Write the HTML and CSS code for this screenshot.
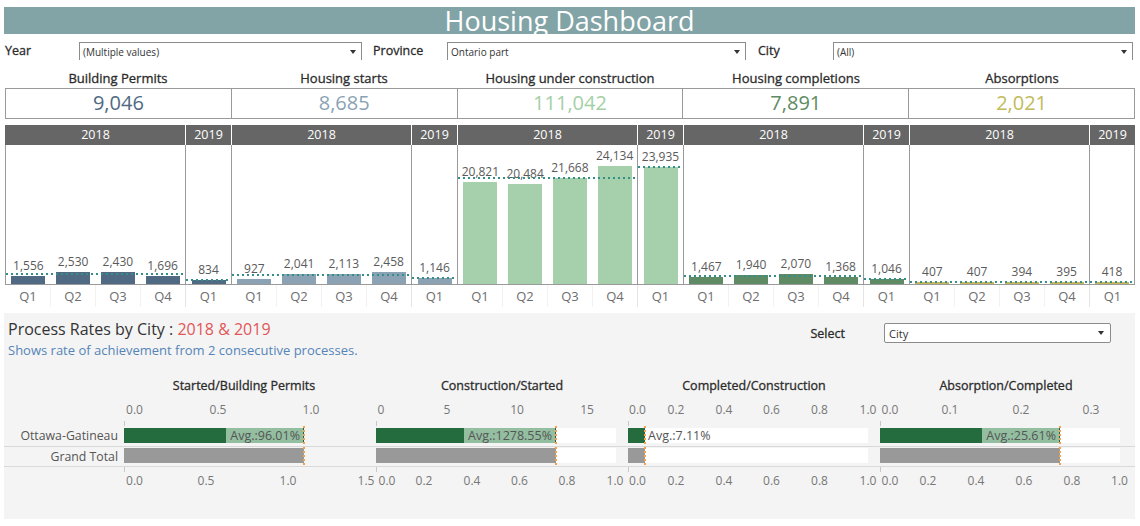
FILE: index.html
```html
<!DOCTYPE html>
<html lang="en">
<head>
<meta charset="utf-8">
<title>Housing Dashboard</title>
<link rel="stylesheet" href="styles.css">
</head>
<body>
<div class="dash">
  <div class="title">Housing Dashboard</div>

  <div class="filters">
    <span class="flabel fl-year">Year</span>
    <div class="fselect fs-year"><span>(Multiple values)</span><span class="caret"></span></div>
    <span class="flabel fl-prov">Province</span>
    <div class="fselect fs-prov"><span>Ontario part</span><span class="caret"></span></div>
    <span class="flabel fl-city">City</span>
    <div class="fselect fs-city"><span>(All)</span><span class="caret"></span></div>
  </div>

  <div class="kpi-titles">
    <div>Building Permits</div>
    <div>Housing starts</div>
    <div>Housing under construction</div>
    <div>Housing completions</div>
    <div>Absorptions</div>
  </div>
  <div class="kpi-values">
    <div class="k1">9,046</div>
    <div class="k2">8,685</div>
    <div class="k3">111,042</div>
    <div class="k4">7,891</div>
    <div class="k5">2,021</div>
  </div>

  <div class="charts">
    <div class="metric m1">
      <div class="mhead"><div class="h18">2018</div><div class="h19">2019</div></div>
      <div class="mplot">
        <div class="p18">
          <div class="slot"><span class="val">1,556</span><div class="bar" style="height:8px"></div></div>
          <div class="slot"><span class="val">2,530</span><div class="bar" style="height:12px"></div></div>
          <div class="slot"><span class="val">2,430</span><div class="bar" style="height:12px"></div></div>
          <div class="slot"><span class="val">1,696</span><div class="bar" style="height:8px"></div></div>
          <div class="avg" style="bottom:9px"></div>
        </div>
        <div class="p19">
          <div class="slot"><span class="val">834</span><div class="bar" style="height:4px"></div></div>
          <div class="avg" style="bottom:3px"></div>
        </div>
      </div>
      <div class="mq"><div class="q18"><span>Q1</span><span>Q2</span><span>Q3</span><span>Q4</span></div><div class="q19"><span>Q1</span></div></div>
    </div>

    <div class="metric m2">
      <div class="mhead"><div class="h18">2018</div><div class="h19">2019</div></div>
      <div class="mplot">
        <div class="p18">
          <div class="slot"><span class="val">927</span><div class="bar" style="height:5px"></div></div>
          <div class="slot"><span class="val">2,041</span><div class="bar" style="height:10px"></div></div>
          <div class="slot"><span class="val">2,113</span><div class="bar" style="height:10px"></div></div>
          <div class="slot"><span class="val">2,458</span><div class="bar" style="height:12px"></div></div>
          <div class="avg" style="bottom:8px"></div>
        </div>
        <div class="p19">
          <div class="slot"><span class="val">1,146</span><div class="bar" style="height:6px"></div></div>
          <div class="avg" style="bottom:5px"></div>
        </div>
      </div>
      <div class="mq"><div class="q18"><span>Q1</span><span>Q2</span><span>Q3</span><span>Q4</span></div><div class="q19"><span>Q1</span></div></div>
    </div>

    <div class="metric m3">
      <div class="mhead"><div class="h18">2018</div><div class="h19">2019</div></div>
      <div class="mplot">
        <div class="p18">
          <div class="slot"><span class="val">20,821</span><div class="bar" style="height:102px"></div></div>
          <div class="slot"><span class="val">20,484</span><div class="bar" style="height:100px"></div></div>
          <div class="slot"><span class="val">21,668</span><div class="bar" style="height:106px"></div></div>
          <div class="slot"><span class="val">24,134</span><div class="bar" style="height:118px"></div></div>
          <div class="avg" style="bottom:105px"></div>
        </div>
        <div class="p19">
          <div class="slot"><span class="val">23,935</span><div class="bar" style="height:117px"></div></div>
          <div class="avg" style="bottom:116px"></div>
        </div>
      </div>
      <div class="mq"><div class="q18"><span>Q1</span><span>Q2</span><span>Q3</span><span>Q4</span></div><div class="q19"><span>Q1</span></div></div>
    </div>

    <div class="metric m4">
      <div class="mhead"><div class="h18">2018</div><div class="h19">2019</div></div>
      <div class="mplot">
        <div class="p18">
          <div class="slot"><span class="val">1,467</span><div class="bar" style="height:7px"></div></div>
          <div class="slot"><span class="val">1,940</span><div class="bar" style="height:9px"></div></div>
          <div class="slot"><span class="val">2,070</span><div class="bar" style="height:10px"></div></div>
          <div class="slot"><span class="val">1,368</span><div class="bar" style="height:7px"></div></div>
          <div class="avg" style="bottom:7px"></div>
        </div>
        <div class="p19">
          <div class="slot"><span class="val">1,046</span><div class="bar" style="height:5px"></div></div>
          <div class="avg" style="bottom:4px"></div>
        </div>
      </div>
      <div class="mq"><div class="q18"><span>Q1</span><span>Q2</span><span>Q3</span><span>Q4</span></div><div class="q19"><span>Q1</span></div></div>
    </div>

    <div class="metric m5">
      <div class="mhead"><div class="h18">2018</div><div class="h19">2019</div></div>
      <div class="mplot">
        <div class="p18">
          <div class="slot"><span class="val">407</span><div class="bar" style="height:2px"></div></div>
          <div class="slot"><span class="val">407</span><div class="bar" style="height:2px"></div></div>
          <div class="slot"><span class="val">394</span><div class="bar" style="height:2px"></div></div>
          <div class="slot"><span class="val">395</span><div class="bar" style="height:2px"></div></div>
          <div class="avg" style="bottom:1px"></div>
        </div>
        <div class="p19">
          <div class="slot"><span class="val">418</span><div class="bar" style="height:2px"></div></div>
          <div class="avg" style="bottom:1px"></div>
        </div>
      </div>
      <div class="mq"><div class="q18"><span>Q1</span><span>Q2</span><span>Q3</span><span>Q4</span></div><div class="q19"><span>Q1</span></div></div>
    </div>
  </div>

  <section class="rates">
    <div class="rates-head">
      <div class="rates-titles">
        <div class="rt">Process Rates by City : <span class="yr">2018 &amp; 2019</span></div>
        <div class="rs">Shows rate of achievement from 2 consecutive processes.</div>
      </div>
      <div class="sel">
        <span class="sel-label">Select</span>
        <div class="sel-box"><span>City</span><span class="caret"></span></div>
      </div>
    </div>

    <div class="rrow rhead">
      <div></div>
      <div class="c1">Started/Building Permits</div>
      <div>Construction/Started</div>
      <div>Completed/Construction</div>
      <div>Absorption/Completed</div>
    </div>

    <div class="rrow raxis rtop">
      <div></div>
      <div class="cell"><span class="tick" style="left:10.5px">0.0</span><span class="tick" style="left:94px">0.5</span><span class="tick" style="left:187px">1.0</span></div>
      <div class="cell"><span class="tick" style="left:5px">0</span><span class="tick" style="left:71px">5</span><span class="tick" style="left:141px">10</span><span class="tick" style="left:211px">15</span></div>
      <div class="cell"><span class="tick" style="left:9.5px">0.0</span><span class="tick" style="left:48px">0.2</span><span class="tick" style="left:96px">0.4</span><span class="tick" style="left:143.5px">0.6</span><span class="tick" style="left:191.5px">0.8</span><span class="tick" style="left:240px">1.0</span></div>
      <div class="cell"><span class="tick" style="left:10px">0.0</span><span class="tick" style="left:70px">0.1</span><span class="tick" style="left:141px">0.2</span><span class="tick" style="left:211px">0.3</span></div>
    </div>

    <div class="rrow rdata r1">
      <div class="rlabel">Ottawa-Gatineau</div>
      <div class="rcell"><div class="track t-short"><div class="dk" style="width:102px"></div><div class="lab" style="width:78px">Avg.:96.01%</div></div><div class="adash" style="left:180px"></div></div>
      <div class="rcell"><div class="track"><div class="dk" style="width:88px"></div><div class="lab" style="width:92px">Avg.:1278.55%</div></div><div class="adash" style="left:180px"></div></div>
      <div class="rcell"><div class="track"><div class="dk" style="width:17px"></div><div class="lab out">Avg.:7.11%</div></div><div class="adash" style="left:17px"></div></div>
      <div class="rcell"><div class="track"><div class="dk" style="width:102px"></div><div class="lab" style="width:78px">Avg.:25.61%</div></div><div class="adash" style="left:180px"></div></div>
    </div>

    <div class="rrow rdata r2">
      <div class="rlabel">Grand Total</div>
      <div class="rcell"><div class="track t-short"><div class="gt" style="width:180px"></div></div><div class="adash" style="left:180px"></div></div>
      <div class="rcell"><div class="track"><div class="gt" style="width:180px"></div></div><div class="adash" style="left:180px"></div></div>
      <div class="rcell"><div class="track"><div class="gt" style="width:17px"></div></div><div class="adash" style="left:17px"></div></div>
      <div class="rcell"><div class="track"><div class="gt" style="width:180px"></div></div><div class="adash" style="left:180px"></div></div>
    </div>

    <div class="rrow raxis rbot">
      <div></div>
      <div class="cell"><span class="tick" style="left:10.5px">0.0</span><span class="tick" style="left:82px">0.5</span><span class="tick" style="left:164px">1.0</span><span class="tick" style="left:242px">1.5</span></div>
      <div class="cell"><span class="tick" style="left:11px">0.0</span><span class="tick" style="left:48px">0.2</span><span class="tick" style="left:96px">0.4</span><span class="tick" style="left:143.5px">0.6</span><span class="tick" style="left:191px">0.8</span><span class="tick" style="left:239px">1.0</span></div>
      <div class="cell"><span class="tick" style="left:9.5px">0.0</span><span class="tick" style="left:48px">0.2</span><span class="tick" style="left:96px">0.4</span><span class="tick" style="left:143.5px">0.6</span><span class="tick" style="left:191.5px">0.8</span><span class="tick" style="left:240px">1.0</span></div>
      <div class="cell"><span class="tick" style="left:10px">0.0</span><span class="tick" style="left:48px">0.2</span><span class="tick" style="left:96px">0.4</span><span class="tick" style="left:144px">0.6</span><span class="tick" style="left:192px">0.8</span><span class="tick" style="left:239.5px">1.0</span></div>
    </div>
  </section>
</div>
</body>
</html>
```

FILE: styles.css
```css
* { box-sizing: border-box; }

body {
  margin: 0;
  background: #ffffff;
  font-family: "Open Sans", "Noto Sans", "Liberation Sans", sans-serif;
  color: #333333;
}

.dash {
  width: 1140px;
  height: 526px;
  padding: 7px 5px 0 4px;
  overflow: hidden;
}

/* medium-weight labels (Tableau Medium look) */
.flabel,
.kpi-titles div,
.sel-label,
.rhead div {
  -webkit-text-stroke: 0.3px currentColor;
}

/* Title */
.title {
  height: 27px;
  background: #82a4a6;
  color: #ffffff;
  font-size: 27px;
  line-height: 27px;
  text-align: center;
}

/* Filters */
.filters {
  display: flex;
  align-items: center;
  height: 18px;
  margin-top: 8px;
}
.flabel {
  font-size: 12.5px;
  color: #2b2b2b;
  line-height: 18px;
}
.fl-year { width: 75px; padding-left: 1px; }
.fl-prov { width: 74px; margin-left: 11px; }
.fl-city { width: 75px; margin-left: 12px; }

.fselect {
  display: flex;
  align-items: center;
  height: 18px;
  border: 1px solid #8c8c8c;
  border-bottom: none;
  background: #ffffff;
  padding-left: 3px;
  font-size: 10px;
  color: #333333;
}
.fs-year { width: 283px; }
.fs-prov { width: 299px; }
.fs-city { width: 300px; }

.caret {
  margin-left: auto;
  margin-right: 5px;
  width: 0;
  height: 0;
  border-left: 3.5px solid transparent;
  border-right: 3.5px solid transparent;
  border-top: 4px solid #333333;
}

/* KPIs */
.kpi-titles {
  display: flex;
  width: 1130px;
  margin: 9px 0 0 1px;
  height: 19px;
}
.kpi-titles div {
  flex: 1;
  text-align: center;
  font-size: 13px;
  line-height: 18px;
  color: #2b2b2b;
}
.kpi-values {
  display: flex;
  width: 1130px;
  margin-left: 1px;
  height: 31px;
  border-top: 1px solid #9a9a9a;
  border-bottom: 1px solid #9a9a9a;
}
.kpi-values div {
  flex: 1;
  border-left: 1px solid #9a9a9a;
  text-align: center;
  font-size: 20px;
  line-height: 28px;
}
.kpi-values div:last-child { border-right: 1px solid #9a9a9a; }
.k1 { color: #4f6a82; }
.k2 { color: #8aa2b4; }
.k3 { color: #a3d0a7; }
.k4 { color: #5e8b63; }
.k5 { color: #c1bb5a; }

/* Bar charts */
.charts {
  display: flex;
  width: 1130px;
  margin: 6px 0 0 1px;
}
.metric {
  flex: 1;
  min-width: 0;
  display: flex;
  flex-direction: column;
}
.mhead {
  display: flex;
  height: 20px;
  background: #666666;
  color: #ffffff;
  font-size: 12.5px;
  line-height: 20px;
  border-left: 1px solid #ffffff;
}
.metric:first-child .mhead { border-left-color: #666666; }
.h18 { width: 179px; text-align: center; }
.h19 { flex: 1; text-align: center; border-left: 1px solid #ffffff; }

.mplot {
  display: flex;
  height: 140px;
  background: #ffffff;
  border-left: 1px solid #9a9a9a;
  border-bottom: 1px solid #9a9a9a;
}
.metric:last-child .mplot { border-right: 1px solid #9a9a9a; }
.p18 { width: 179px; position: relative; display: flex; }
.p19 { flex: 1; position: relative; display: flex; border-left: 1px solid #9a9a9a; }

.slot {
  flex: 1;
  display: flex;
  flex-direction: column;
  justify-content: flex-end;
  align-items: center;
}
.val {
  font-size: 12px;
  line-height: 14px;
  color: #5a5a5a;
  margin-bottom: 3px;
  white-space: nowrap;
}
.bar { width: 34px; }
.m1 .bar { background: #4f6a82; }
.m2 .bar { background: #8aa2b4; }
.m3 .bar { background: #a6cfab; }
.m4 .bar { background: #5e8b63; }
.m5 .bar { background: #c9b55c; }

.avg {
  position: absolute;
  left: 0;
  right: 0;
  height: 2px;
  z-index: 2;
  background: repeating-linear-gradient(90deg, #348f88 0 2px, transparent 2px 5px);
}

.mq {
  display: flex;
  height: 22px;
  border-left: 1px solid transparent;
}
.q18 { width: 179px; display: flex; }
.q19 { flex: 1; display: flex; border-left: 1px solid #e4e4e4; }
.mq span {
  flex: 1;
  text-align: center;
  font-size: 13px;
  line-height: 22px;
  color: #6e6e6e;
}
.q18 span + span { border-left: 1px solid #f2f2f2; }

/* Process rates */
.rates {
  margin-top: 6px;
  height: 206px;
  background: #f4f4f4;
  padding-top: 6px;
}
.rates-head { display: flex; }
.rates-titles { padding-left: 4px; }
.rt {
  font-size: 16px;
  line-height: 20px;
  color: #333333;
}
.rt .yr { color: #e15759; }
.rs {
  margin-top: 3px;
  font-size: 13px;
  line-height: 17px;
  color: #5584b8;
}
.sel {
  margin-left: auto;
  margin-right: 24px;
  margin-top: 4px;
  height: 20px;
  display: flex;
  align-items: center;
}
.sel-label {
  font-size: 12.5px;
  color: #2b2b2b;
  margin-right: 39px;
}
.sel-box {
  width: 227px;
  height: 20px;
  display: flex;
  align-items: center;
  padding-left: 4px;
  background: #ffffff;
  border: 1px solid #8c8c8c;
  border-radius: 2px;
  font-size: 11px;
  color: #333333;
}
.sel-box .caret { margin-right: 6px; }

.rrow {
  display: grid;
  grid-template-columns: 120px repeat(4, 252px);
}
.rhead {
  margin-top: 19px;
  height: 16px;
  font-size: 12.5px;
  line-height: 16px;
  color: #2b2b2b;
}
.rhead div { text-align: center; }
.rhead .c1 { padding-right: 12px; }

.raxis {
  height: 16px;
  font-size: 12px;
  line-height: 16px;
  color: #777777;
}
.rtop { margin-top: 8px; }
.rbot { margin-top: 6px; }
.raxis .cell { position: relative; }
.tick {
  position: absolute;
  top: 0;
  transform: translateX(-50%);
  white-space: nowrap;
}
.rtop .cell::after,
.rbot .cell::before {
  content: "";
  position: absolute;
  left: 0;
  width: 1px;
  height: 5px;
  background: #c8c8c8;
}
.rtop .cell::after { bottom: -8px; }
.rbot .cell::before { top: -6px; }

.rdata {
  border-bottom: 1px solid #d9d9d9;
}
.r1 { margin-top: 8px; height: 21px; }
.r2 { height: 20px; }
.rlabel {
  text-align: right;
  padding-right: 6px;
  font-size: 12.3px;
  line-height: 20px;
  color: #555555;
  white-space: nowrap;
}
.r2 .rlabel { line-height: 19px; }
.rcell { position: relative; }
.track {
  display: flex;
  width: 240px;
  height: 15px;
  background: #ffffff;
}
.track.t-short { width: 180px; }
.r1 .track { margin-top: 2px; }
.r2 .track { margin-top: 1px; }
.dk { background: #246b3e; flex: none; }
.gt { background: #999999; flex: none; }
.lab {
  flex: none;
  background: #93bea0;
  border-right: 1px solid #2f5d40;
  text-align: right;
  padding-right: 3px;
  font-size: 12.5px;
  line-height: 15px;
  color: #555555;
  white-space: nowrap;
  overflow: hidden;
}
.lab.out {
  background: transparent;
  border-right: none;
  text-align: left;
  padding-left: 3px;
}
.adash {
  position: absolute;
  top: 0;
  bottom: 0;
  width: 2px;
  margin-left: -1px;
  background: repeating-linear-gradient(180deg, #f4a24c 0 2px, transparent 2px 4px);
}
```
